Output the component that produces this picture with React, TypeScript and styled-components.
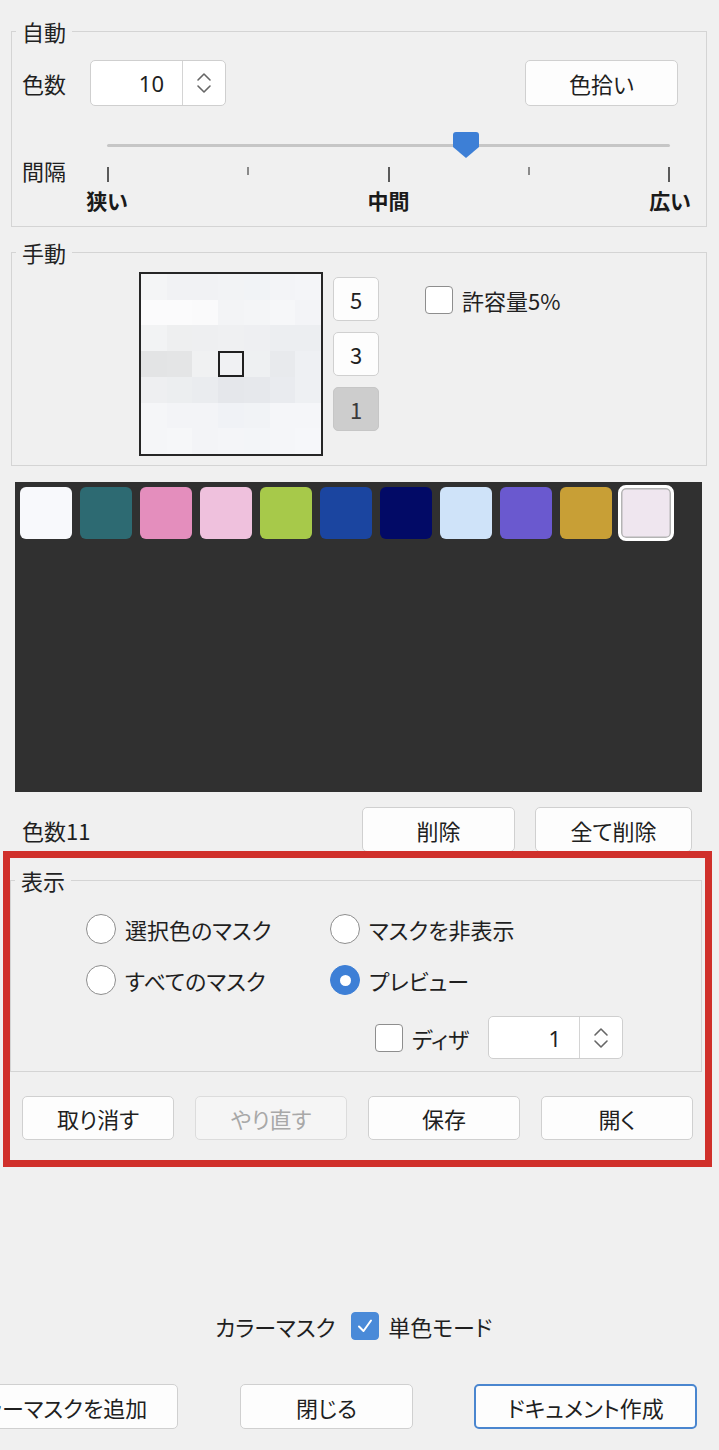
import React from "react";
import styled, { createGlobalStyle, css } from "styled-components";

const GlobalStyle = createGlobalStyle`
  html, body { margin: 0; padding: 0; background: #f0f0f0; }
  body {
    font-family: "Noto Sans CJK JP", "Noto Sans", sans-serif;
    color: #1f1f1f;
    font-feature-settings: "palt";
  }
  * { box-sizing: border-box; }
`;

const Page = styled.div`
  width: 719px;
  height: 1450px;
  overflow: hidden;
  display: flex;
  flex-direction: column;
  padding-top: 16px;
  font-size: 22px;
  line-height: 30px;
`;

const Group = styled.fieldset<{ $mt?: number; $mr?: number; $ml?: number }>`
  margin: ${(p) => p.$mt ?? 0}px ${(p) => p.$mr ?? 12}px 0 ${(p) => p.$ml ?? 11}px;
  padding: 0;
  border: 1px solid #d4d4d4;
  min-inline-size: 0;
`;

const Legend = styled.legend`
  margin-left: 4px;
  padding: 0 6px;
  font-size: 22px;
  line-height: 30px;
  color: #222;
`;

const Label = styled.span<{ $mt?: number }>`
  font-size: 22px;
  line-height: 30px;
  white-space: nowrap;
  margin-top: ${(p) => p.$mt ?? 0}px;
`;

const Spacer = styled.div<{ $w?: number }>`
  flex: ${(p) => (p.$w ? "none" : 1)};
  width: ${(p) => (p.$w ? `${p.$w}px` : "auto")};
`;

const Button = styled.button<{ $w: number; $h?: number; $variant?: "default" | "disabled" | "primary" | "pressed"; $ml?: number }>`
  width: ${(p) => p.$w}px;
  height: ${(p) => p.$h ?? 45}px;
  margin-left: ${(p) => p.$ml ?? 0}px;
  flex: none;
  padding: 0;
  font-family: inherit;
  font-feature-settings: "palt";
  font-size: 22px;
  color: #1f1f1f;
  background: #fdfdfd;
  border: 1px solid #d0d0d0;
  border-radius: 5px;
  white-space: nowrap;
  overflow: hidden;
  display: flex;
  align-items: center;
  justify-content: center;
  ${(p) =>
    p.$variant === "disabled" &&
    css`
      color: #a8a8a8;
      background: #f5f5f5;
      border-color: #dcdcdc;
    `}
  ${(p) =>
    p.$variant === "primary" &&
    css`
      border: 2px solid #4a86cf;
    `}
  ${(p) =>
    p.$variant === "pressed" &&
    css`
      background: #cdcdcd;
      border-color: #c6c6c6;
      color: #3a3a3a;
    `}
`;

/* ---------- spin box ---------- */
const Spin = styled.div<{ $w: number; $h: number }>`
  width: ${(p) => p.$w}px;
  height: ${(p) => p.$h}px;
  flex: none;
  display: flex;
  background: #ffffff;
  border: 1px solid #cfcfcf;
  border-radius: 5px;
`;
const SpinValue = styled.div`
  flex: 1;
  display: flex;
  align-items: center;
  justify-content: flex-end;
  padding-right: 18px;
  font-size: 22px;
  font-family: "Noto Sans", sans-serif;
`;
const SpinArrows = styled.div`
  width: 43px;
  border-left: 1px solid #d4d4d4;
  display: flex;
  align-items: center;
  justify-content: center;
`;

const Chevrons = () => (
  <svg width="18" height="26" viewBox="0 0 18 26" fill="none" stroke="#666" strokeWidth="1.6" strokeLinecap="round" strokeLinejoin="round">
    <path d="M3 10 L9 4 L15 10" />
    <path d="M3 16 L9 22 L15 16" />
  </svg>
);

const SpinBox = ({ value, w, h }: { value: string; w: number; h: number }) => (
  <Spin $w={w} $h={h}>
    <SpinValue>{value}</SpinValue>
    <SpinArrows>
      <Chevrons />
    </SpinArrows>
  </Spin>
);

/* ---------- auto group ---------- */
const AutoBody = styled.div`
  display: flex;
  flex-direction: column;
  padding: 14px 0 14px 0;
`;
const CountRow = styled.div`
  display: flex;
  align-items: center;
  height: 46px;
  padding: 0 28px 0 10px;
  gap: 24px;
`;
const SliderRow = styled.div`
  display: flex;
  align-items: flex-start;
  margin-top: 26px;
  padding-left: 10px;
`;
const SliderWrap = styled.div`
  width: 607px;
  margin-left: 19px;
  display: flex;
  flex-direction: column;
`;
const TrackZone = styled.div`
  height: 26px;
  padding: 0 22px;
  display: flex;
  align-items: center;
`;
const Track = styled.div`
  position: relative;
  flex: 1;
  height: 3px;
  background: #c6c6c6;
  border-radius: 2px;
`;
const Thumb = styled.svg`
  position: absolute;
  top: -12px;
  width: 26px;
  height: 26px;
`;
const Ticks = styled.div`
  height: 15px;
  margin-top: 9px;
  padding: 0 22px;
  display: flex;
  justify-content: space-between;
  align-items: flex-start;
`;
const Tick = styled.div<{ $major?: boolean }>`
  width: 2px;
  height: ${(p) => (p.$major ? 15 : 8)}px;
  background: ${(p) => (p.$major ? "#5a5a5a" : "#8a8a8a")};
`;
const TickLabels = styled.div`
  margin-top: 6px;
  display: flex;
  justify-content: space-between;
`;
const TickLabel = styled.span`
  width: 44px;
  text-align: center;
  font-size: 21px;
  line-height: 24px;
  font-weight: 700;
  color: #1a1a1a;
`;

/* ---------- manual group ---------- */
const ManualBody = styled.div`
  display: flex;
  align-items: flex-start;
  padding: 5px 0 9px 127px;
`;
const Preview = styled.div`
  width: 184px;
  height: 184px;
  border: 2px solid #262626;
  display: grid;
  grid-template-columns: repeat(7, 1fr);
  grid-template-rows: repeat(7, 1fr);
`;
const Cell = styled.div<{ $c: string; $center?: boolean }>`
  background: ${(p) => p.$c};
  ${(p) =>
    p.$center &&
    css`
      box-shadow: inset 0 0 0 2px #202020;
    `}
`;
const ZoomButtons = styled.div`
  display: flex;
  flex-direction: column;
  gap: 11px;
  margin: 5px 0 0 10px;
`;
const CheckRow = styled.label<{ $ml?: number; $mt?: number }>`
  display: flex;
  align-items: center;
  gap: 9px;
  margin-left: ${(p) => p.$ml ?? 0}px;
  margin-top: ${(p) => p.$mt ?? 0}px;
  font-size: 22px;
  line-height: 30px;
  white-space: nowrap;
`;
const Box = styled.span<{ $checked?: boolean }>`
  width: 28px;
  height: 28px;
  flex: none;
  border-radius: 4px;
  border: 1.5px solid #8e8e8e;
  background: #fff;
  display: flex;
  align-items: center;
  justify-content: center;
  ${(p) =>
    p.$checked &&
    css`
      border-color: #4a8ad8;
      background: #4a8ad8;
    `}
`;

const Checkbox = ({ checked }: { checked?: boolean }) => (
  <Box $checked={checked}>
    {checked && (
      <svg width="20" height="20" viewBox="0 0 20 20" fill="none" stroke="#fff" strokeWidth="2" strokeLinecap="round" strokeLinejoin="round">
        <path d="M4 10.5 L8.5 15 L16 4.5" />
      </svg>
    )}
  </Box>
);

/* ---------- palette ---------- */
const Palette = styled.div`
  margin: 16px 17px 0 15px;
  height: 310px;
  background: #303030;
  padding: 5px;
  display: flex;
  align-items: flex-start;
  gap: 8px;
`;
const Swatch = styled.div<{ $c: string; $selected?: boolean }>`
  width: 52px;
  height: 52px;
  flex: none;
  border-radius: 6px;
  background: ${(p) => p.$c};
  ${(p) =>
    p.$selected &&
    css`
      width: 56px;
      height: 56px;
      margin: -2px;
      border: 3px solid #ffffff;
      border-radius: 8px;
      box-shadow: inset 0 0 0 1.5px #b4b4b4;
    `}
`;

const CountFooter = styled.div`
  display: flex;
  align-items: center;
  height: 45px;
  margin-top: 15px;
  padding: 0 27px 0 22px;
  gap: 20px;
`;

/* ---------- display section (highlighted) ---------- */
const Highlight = styled.section`
  margin: -1px 0 0 3px;
  width: 709px;
  border: 7px solid #d0302b;
  padding: 0 0 20px 0;
  display: flex;
  flex-direction: column;
`;
const DisplayBody = styled.div`
  display: grid;
  grid-template-columns: 244px auto;
  row-gap: 21px;
  padding: 19px 0 12px 75px;
`;
const RadioItem = styled.label`
  display: flex;
  align-items: center;
  gap: 9px;
  height: 30px;
  font-size: 22px;
  white-space: nowrap;
`;
const RadioCircle = styled.span<{ $on?: boolean }>`
  width: 30px;
  height: 30px;
  flex: none;
  border-radius: 50%;
  border: 1.5px solid #8e8e8e;
  background: #fff;
  display: flex;
  align-items: center;
  justify-content: center;
  ${(p) =>
    p.$on &&
    css`
      border-color: #3d7fd6;
      background: #3d7fd6;
      &::after {
        content: "";
        width: 11px;
        height: 11px;
        border-radius: 50%;
        background: #fff;
      }
    `}
`;
const DitherRow = styled.div`
  grid-column: 1 / -1;
  display: flex;
  align-items: center;
  height: 43px;
  padding-left: 289px;
`;
const ActionRow = styled.div`
  display: flex;
  gap: 21px;
  margin-top: 24px;
  padding-left: 12px;
`;

/* ---------- bottom ---------- */
const MonoRow = styled.div`
  display: flex;
  align-items: center;
  height: 30px;
  margin-top: 144px;
  padding-left: 215px;
  font-size: 22px;
`;
const FinalRow = styled.div`
  display: flex;
  margin-top: 43px;
`;

const cells: string[][] = [
  ["#f4f5f6", "#f1f2f4", "#f1f2f4", "#f2f3f5", "#f1f3f6", "#f3f4f7", "#f4f5f8"],
  ["#fbfbfc", "#fbfbfc", "#fafafb", "#f3f4f6", "#f4f5f7", "#f6f7f9", "#f3f4f7"],
  ["#f2f3f4", "#eeeff0", "#eeeff1", "#eff0f2", "#eeeff2", "#eceef1", "#eceef1"],
  ["#e3e4e5", "#e4e5e6", "#f0f1f2", "#f0f1f3", "#eef0f2", "#e8eaed", "#eef0f3"],
  ["#eeeff1", "#eceef0", "#eaecef", "#e5e7eb", "#e6e8ec", "#e9ebef", "#eef0f3"],
  ["#f5f6f8", "#f3f4f7", "#f3f4f7", "#f0f2f6", "#f1f3f6", "#f5f6f9", "#f5f6f9"],
  ["#f5f6f8", "#f6f7f9", "#f3f4f7", "#f4f5f8", "#f3f5f8", "#f5f6f9", "#f6f7fa"],
];

const swatches = [
  "#f8f9fc",
  "#2d6a72",
  "#e48ebd",
  "#efc1dd",
  "#a7c94a",
  "#1b45a0",
  "#020a66",
  "#cfe3f9",
  "#6a59cf",
  "#c89f36",
  "#efe6ef",
];

const sliderValue = 0.638;

export default function App() {
  return (
    <>
      <GlobalStyle />
      <Page>
        <Group>
          <Legend>自動</Legend>
          <AutoBody>
            <CountRow>
              <Label>色数</Label>
              <SpinBox value="10" w={136} h={46} />
              <Spacer />
              <Button $w={153} $h={46}>色拾い</Button>
            </CountRow>
            <SliderRow>
              <Label $mt={23}>間隔</Label>
              <SliderWrap>
                <TrackZone>
                  <Track>
                    <Thumb viewBox="0 0 26 26" style={{ left: `calc(${sliderValue * 100}% - 13px)` }}>
                      <path d="M3 0 H23 Q26 0 26 3 V15 L13 26 L0 15 V3 Q0 0 3 0 Z" fill="#3d7fd6" />
                    </Thumb>
                  </Track>
                </TrackZone>
                <Ticks>
                  <Tick $major />
                  <Tick />
                  <Tick $major />
                  <Tick />
                  <Tick $major />
                </Ticks>
                <TickLabels>
                  <TickLabel>狭い</TickLabel>
                  <TickLabel>中間</TickLabel>
                  <TickLabel>広い</TickLabel>
                </TickLabels>
              </SliderWrap>
            </SliderRow>
          </AutoBody>
        </Group>

        <Group $mt={10}>
          <Legend>手動</Legend>
          <ManualBody>
            <Preview>
              {cells.map((row, r) =>
                row.map((c, i) => <Cell key={`${r}-${i}`} $c={c} $center={r === 3 && i === 3} />)
              )}
            </Preview>
            <ZoomButtons>
              <Button $w={46} $h={44}>5</Button>
              <Button $w={46} $h={44}>3</Button>
              <Button $w={46} $h={44} $variant="pressed">1</Button>
            </ZoomButtons>
            <CheckRow $ml={46} $mt={13}>
              <Checkbox />
              許容量5%
            </CheckRow>
          </ManualBody>
        </Group>

        <Palette>
          {swatches.map((c, i) => (
            <Swatch key={i} $c={c} $selected={i === swatches.length - 1} />
          ))}
        </Palette>

        <CountFooter>
          <Label>色数11</Label>
          <Spacer />
          <Button $w={153}>削除</Button>
          <Button $w={157}>全て削除</Button>
        </CountFooter>

        <Highlight>
          <Group $mt={7} $ml={0} $mr={3}>
            <Legend>表示</Legend>
            <DisplayBody>
              <RadioItem>
                <RadioCircle />
                選択色のマスク
              </RadioItem>
              <RadioItem>
                <RadioCircle />
                マスクを非表示
              </RadioItem>
              <RadioItem>
                <RadioCircle />
                すべてのマスク
              </RadioItem>
              <RadioItem>
                <RadioCircle $on />
                プレビュー
              </RadioItem>
              <DitherRow>
                <CheckRow>
                  <Checkbox />
                  ディザ
                </CheckRow>
                <Spacer $w={19} />
                <SpinBox value="1" w={135} h={43} />
              </DitherRow>
            </DisplayBody>
          </Group>
          <ActionRow>
            <Button $w={152} $h={44}>取り消す</Button>
            <Button $w={152} $h={44} $variant="disabled">やり直す</Button>
            <Button $w={152} $h={44}>保存</Button>
            <Button $w={152} $h={44}>開く</Button>
          </ActionRow>
        </Highlight>

        <MonoRow>
          カラーマスク
          <CheckRow $ml={16}>
            <Checkbox checked />
            単色モード
          </CheckRow>
        </MonoRow>

        <FinalRow>
          <Button $w={246} $ml={-68}>カラーマスクを追加</Button>
          <Button $w={173} $ml={62}>閉じる</Button>
          <Button $w={223} $ml={61} $variant="primary">ドキュメント作成</Button>
        </FinalRow>
      </Page>
    </>
  );
}
